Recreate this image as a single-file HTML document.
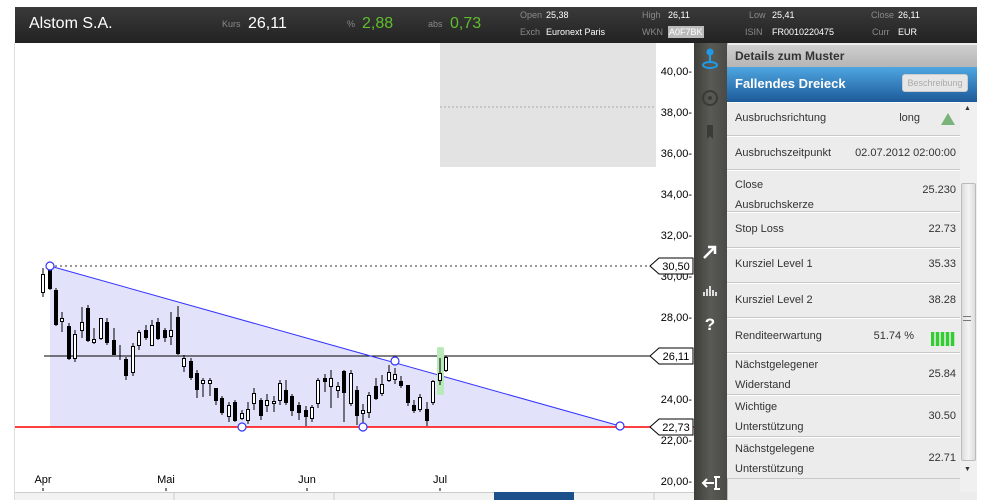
<!DOCTYPE html>
<html><head><meta charset="utf-8"><style>
*{margin:0;padding:0;box-sizing:border-box}
body{width:997px;height:500px;background:#fff;font-family:"Liberation Sans",Arial,sans-serif;position:relative;overflow:hidden}
.a{position:absolute;white-space:nowrap}
#hdr{left:15px;top:7px;width:962px;height:36px;background:linear-gradient(#3a3a3a,#222);}
.sm{font-size:9px;color:#8a8a8a}
.wv{font-size:9px;color:#fff}
.row{position:absolute;left:727px;width:233px;border-bottom:1px solid #c8c8c8;border-top:1px solid #fff;background:#ececec;font-size:11px;color:#333}
.row .l{position:absolute;left:8px}
.row .r{position:absolute;right:4px}
</style></head><body>
<div class="a" style="left:14px;top:43px;width:1px;height:457px;background:#ddd"></div>
<div class="a" id="hdr"></div>
<div class="a" style="left:29px;top:15px;font-size:16px;color:#fff">Alstom S.A.</div>
<div class="a sm" style="left:222px;top:19px">Kurs</div>
<div class="a" style="left:248px;top:15px;font-size:16px;color:#fff">26,11</div>
<div class="a sm" style="left:347px;top:19px">%</div>
<div class="a" style="left:362px;top:15px;font-size:16px;color:#5fbf2a">2,88</div>
<div class="a sm" style="left:428px;top:19px">abs</div>
<div class="a" style="left:450px;top:15px;font-size:16px;color:#5fbf2a">0,73</div>
<div class="a sm" style="left:520px;top:10px">Open</div><div class="a wv" style="left:546px;top:10px">25,38</div>
<div class="a sm" style="left:642px;top:10px">High</div><div class="a wv" style="left:668px;top:10px">26,11</div>
<div class="a sm" style="left:749px;top:10px">Low</div><div class="a wv" style="left:772px;top:10px">25,41</div>
<div class="a sm" style="left:871px;top:10px">Close</div><div class="a wv" style="left:898px;top:10px">26,11</div>
<div class="a sm" style="left:520px;top:27px">Exch</div><div class="a wv" style="left:546px;top:27px">Euronext Paris</div>
<div class="a sm" style="left:642px;top:27px">WKN</div><div class="a wv" style="left:668px;top:26px;background:#bbb;color:#fff;padding:1px 1px">A0F7BK</div>
<div class="a sm" style="left:745px;top:27px">ISIN</div><div class="a wv" style="left:772px;top:27px">FR0010220475</div>
<div class="a sm" style="left:872px;top:27px">Curr</div><div class="a wv" style="left:898px;top:27px">EUR</div>

<svg class="a" style="left:0;top:0" width="997" height="500">
<rect x="440" y="43" width="216" height="124" fill="#e3e3e3"/>
<line x1="440" y1="107" x2="656" y2="107" stroke="#aaa" stroke-dasharray="2,2"/>
<polygon points="50,266 620,426 50,427" fill="#e2e2fb"/>
<line x1="50" y1="266" x2="650" y2="266" stroke="#333" stroke-dasharray="2,3"/>
<line x1="44" y1="356" x2="650" y2="356" stroke="#000"/>
<line x1="15" y1="427" x2="694" y2="427" stroke="#f00" stroke-width="1.5"/>
<line x1="50" y1="266" x2="620" y2="426" stroke="#33f"/>
<rect x="437" y="347" width="7" height="48" rx="2" fill="#b9e8b9"/>
<g stroke="#000" stroke-width="1">
<path d="M43,268V297M50,262V290M56,288V326M62,312V332M69,323V360M75,330V362M82,307V338M88,305V342M94,328V344M101,318V340M107,318V345M114,328V355M120,345V360M126,357V380M133,343V376M139,330V350M146,325V340M152,320V346M158,318V340M165,328V342M171,312V345M178,306V355M184,355V372M191,358V380M197,370V398M203,378V397M210,378V396M216,388V405M222,396V415M229,402V422M235,400V422M242,410V420M248,402V424M254,388V410M261,398V420M267,394V412M274,396V412M280,380V405M286,380V405M292,394V416M299,402V420M306,406V426M312,405V422M318,378V408M325,374V392M331,370V408M338,382V398M344,370V422M351,370V406M357,386V425M363,404V425M369,392V418M376,378V400M382,375V396M389,365V382M395,368V384M401,376V388M408,385V406M414,400V413M420,394V412M427,402V426M433,380V405M440,358V385M446,356V372"/>
</g>
<g stroke="#000" stroke-width="1">
<rect x="41.5" y="274.5" width="3" height="18" fill="#fff"/><rect x="48.5" y="266.5" width="3" height="22" fill="#000"/>
<rect x="54.5" y="290.5" width="3" height="34" fill="#000"/><rect x="60.5" y="318.5" width="3" height="3" fill="#fff"/>
<rect x="67.5" y="326.5" width="3" height="32" fill="#000"/><rect x="73.5" y="334.5" width="3" height="24" fill="#fff"/>
<rect x="80.5" y="322.5" width="3" height="8" fill="#fff"/><rect x="86.5" y="308.5" width="3" height="32" fill="#000"/>
<rect x="92.5" y="339.5" width="3" height="3" fill="#fff"/><rect x="99.5" y="318.5" width="3" height="20" fill="#fff"/>
<rect x="105.5" y="322.5" width="3" height="20" fill="#000"/><rect x="112.5" y="340.5" width="3" height="14" fill="#000"/>
<rect x="124.5" y="359.5" width="3" height="16" fill="#000"/><rect x="131.5" y="346.5" width="3" height="26" fill="#fff"/>
<rect x="137.5" y="332.5" width="3" height="13" fill="#fff"/><rect x="144.5" y="330.5" width="3" height="7" fill="#000"/>
<rect x="150.5" y="325.5" width="3" height="20" fill="#fff"/><rect x="156.5" y="322.5" width="3" height="16" fill="#000"/>
<rect x="163.5" y="330.5" width="3" height="7" fill="#000"/><rect x="169.5" y="330.5" width="3" height="6" fill="#fff"/>
<rect x="176.5" y="317.5" width="3" height="36" fill="#000"/><rect x="182.5" y="358.5" width="3" height="8" fill="#fff"/>
<rect x="189.5" y="361.5" width="3" height="16" fill="#000"/><rect x="195.5" y="373.5" width="3" height="16" fill="#000"/>
<rect x="201.5" y="380.5" width="3" height="3" fill="#fff"/><rect x="208.5" y="380.5" width="3" height="3" fill="#fff"/>
<rect x="214.5" y="388.5" width="3" height="12" fill="#000"/><rect x="220.5" y="398.5" width="3" height="14" fill="#000"/>
<rect x="227.5" y="405.5" width="3" height="11" fill="#fff"/><rect x="233.5" y="402.5" width="3" height="18" fill="#000"/>
<rect x="240.5" y="413.5" width="3" height="5" fill="#fff"/><rect x="246.5" y="409.5" width="3" height="11" fill="#fff"/>
<rect x="252.5" y="393.5" width="3" height="10" fill="#fff"/><rect x="259.5" y="400.5" width="3" height="15" fill="#000"/>
<rect x="265.5" y="400.5" width="3" height="5" fill="#fff"/><rect x="272.5" y="401.5" width="3" height="2" fill="#fff"/>
<rect x="278.5" y="383.5" width="3" height="17" fill="#fff"/><rect x="284.5" y="390.5" width="3" height="12" fill="#000"/>
<rect x="290.5" y="396.5" width="3" height="14" fill="#000"/><rect x="297.5" y="405.5" width="3" height="7" fill="#000"/>
<rect x="304.5" y="410.5" width="3" height="6" fill="#000"/><rect x="310.5" y="407.5" width="3" height="11" fill="#fff"/>
<rect x="316.5" y="380.5" width="3" height="23" fill="#fff"/><rect x="323.5" y="378.5" width="3" height="3" fill="#000"/>
<rect x="329.5" y="378.5" width="3" height="8" fill="#fff"/><rect x="336.5" y="386.5" width="3" height="4" fill="#fff"/>
<rect x="342.5" y="371.5" width="3" height="21" fill="#000"/><rect x="349.5" y="373.5" width="3" height="30" fill="#fff"/>
<rect x="355.5" y="390.5" width="3" height="25" fill="#000"/><rect x="361.5" y="410.5" width="3" height="3" fill="#fff"/>
<rect x="367.5" y="395.5" width="3" height="17" fill="#fff"/><rect x="374.5" y="386.5" width="3" height="12" fill="#000"/>
<rect x="380.5" y="384.5" width="3" height="9" fill="#fff"/><rect x="387.5" y="372.5" width="3" height="8" fill="#fff"/>
<rect x="393.5" y="374.5" width="3" height="5" fill="#fff"/><rect x="399.5" y="381.5" width="3" height="4" fill="#000"/>
<rect x="406.5" y="385.5" width="3" height="17" fill="#000"/><rect x="412.5" y="405.5" width="3" height="5" fill="#000"/>
<rect x="418.5" y="397.5" width="3" height="12" fill="#fff"/><rect x="425.5" y="409.5" width="3" height="11" fill="#000"/>
<rect x="431.5" y="381.5" width="3" height="21" fill="#fff"/><rect x="438.5" y="373.5" width="3" height="7" fill="#fff"/>
<rect x="444.5" y="357.5" width="3" height="13" fill="#fff"/>
</g>
<g fill="#fff" stroke="#33f" stroke-width="1.2">
<circle cx="50" cy="266" r="4"/><circle cx="242" cy="427" r="4"/><circle cx="363" cy="427" r="4"/><circle cx="395" cy="361" r="4"/><circle cx="620" cy="426" r="4"/>
</g>
<g font-size="11" fill="#000" text-anchor="end">
<text x="692" y="75">40,00-</text><text x="692" y="116">38,00-</text><text x="692" y="157">36,00-</text><text x="692" y="198">34,00-</text><text x="692" y="239">32,00-</text><text x="692" y="280">30,00-</text><text x="692" y="321">28,00-</text><text x="692" y="403">24,00-</text><text x="692" y="444">22,00-</text><text x="692" y="485">20,00-</text>
</g>
<g stroke="#000" fill="#fff">
<path d="M650,266L659,258H693V274H659Z"/><path d="M650,356L659,348H693V364H659Z"/><path d="M650,427L659,419H693V435H659Z"/>
</g>
<g font-size="11" fill="#000" text-anchor="middle">
<text x="676" y="270">30,50</text><text x="676" y="360">26,11</text><text x="676" y="431">22,73</text>
<text x="43" y="483">Apr</text><text x="166" y="483">Mai</text><text x="307" y="483">Jun</text><text x="440" y="483">Jul</text>
</g>
<path d="M43,488v3M166,488v3M307,488v3M440,488v3" stroke="#000"/>
<rect x="15" y="492" width="679" height="8" fill="#f2f2f2"/><line x1="15" y1="492.5" x2="694" y2="492.5" stroke="#ccc"/>
<path d="M174,492v8M334,492v8M654,492v8" stroke="#ccc"/>
<rect x="494" y="492" width="80" height="8" fill="#1d4f8a"/>
</svg>

<div class="a" style="left:694px;top:43px;width:33px;height:457px;background:linear-gradient(90deg,#3d3d3a,#5a5a55 50%,#4a4a46)"></div>
<svg class="a" style="left:694px;top:43px" width="33" height="457">
<circle cx="16" cy="9" r="3.5" fill="#1e9be8"/><rect x="15" y="11" width="2" height="8" fill="#1e9be8"/><ellipse cx="16" cy="22" rx="7" ry="3" fill="none" stroke="#1e9be8" stroke-width="2"/>
<circle cx="16" cy="55" r="7" fill="none" stroke="#3a3a38" stroke-width="2"/><circle cx="16" cy="55" r="2" fill="#3a3a38"/>
<path d="M13,82h6v14l-3,-3l-3,3z" fill="#3a3a38"/>
<path d="M10,215L20,205M14,204h7v7" stroke="#fff" stroke-width="2.5" fill="none"/>
<path d="M10,253v-4M13,253v-7M16,253v-10M19,253v-6M22,253v-4" stroke="#fff" stroke-width="1.6"/>
<text x="16" y="287" font-size="17" font-weight="bold" fill="#fff" text-anchor="middle">?</text>
<path d="M10,440h10M13,436l-4,4l4,4M22,434v12M20,434h6M20,446h6" stroke="#fff" stroke-width="2" fill="none"/>
</svg>

<div class="a" style="left:727px;top:43px;width:250px;height:457px;background:#ececec;border-left:1px solid #bbb"></div>
<div class="a" style="left:727px;top:45px;width:250px;height:22px;background:linear-gradient(#cfcfcf,#b5b5b5);font-size:12px;font-weight:bold;color:#333;padding:4px 8px">Details zum Muster</div>
<div class="a" style="left:727px;top:67px;width:250px;height:35px;background:linear-gradient(#4ea6e0,#1d5a9a);font-size:13px;font-weight:bold;color:#fff;padding:9px 8px">Fallendes Dreieck</div>
<div class="a" style="left:902px;top:74px;width:66px;height:18px;background:#e6e6e6;border:1px solid #ccc;border-radius:3px;font-size:9px;color:#aaa;text-align:center;line-height:16px">Beschreibung</div>
<div class="row" style="top:102px;height:34px"><span class="l" style="top:9px">Ausbruchsrichtung</span><span class="r" style="top:9px;right:40px">long</span><svg class="a" style="left:214px;top:10px" width="14" height="12"><path d="M7,0L14,12H0Z" fill="#7ab37a"/></svg></div>
<div class="row" style="top:136px;height:34px"><span class="l" style="top:10px">Ausbruchszeitpunkt</span><span class="r" style="top:10px">02.07.2012 02:00:00</span></div>
<div class="row" style="top:170px;height:42px"><span class="l" style="top:4px;line-height:20px">Close<br>Ausbruchskerze</span><span class="r" style="top:13px">25.230</span></div>
<div class="row" style="top:212px;height:36px"><span class="l" style="top:10px">Stop Loss</span><span class="r" style="top:10px">22.73</span></div>
<div class="row" style="top:248px;height:35px"><span class="l" style="top:9px">Kursziel Level 1</span><span class="r" style="top:9px">35.33</span></div>
<div class="row" style="top:283px;height:35px"><span class="l" style="top:10px">Kursziel Level 2</span><span class="r" style="top:10px">38.28</span></div>
<div class="row" style="top:318px;height:35px"><span class="l" style="top:11px">Renditeerwartung</span><span class="r" style="top:11px;right:46px">51.74 %</span><svg class="a" style="left:204px;top:13px" width="25" height="14"><path d="M1.5,0v14M6.5,0v14M11.5,0v14M16.5,0v14M21.5,0v14" stroke="#3c3" stroke-width="3.5"/></svg></div>
<div class="row" style="top:353px;height:42px"><span class="l" style="top:1px;line-height:20px">Nächstgelegener<br>Widerstand</span><span class="r" style="top:14px">25.84</span></div>
<div class="row" style="top:395px;height:42px"><span class="l" style="top:1px;line-height:20px">Wichtige<br>Unterstützung</span><span class="r" style="top:14px">30.50</span></div>
<div class="row" style="top:437px;height:42px"><span class="l" style="top:1px;line-height:20px">Nächstgelegene<br>Unterstützung</span><span class="r" style="top:14px">22.71</span></div>
<div class="a" style="left:960px;top:102px;width:17px;height:390px;background:#f0f0f0"></div>
<div class="a" style="left:961px;top:183px;width:15px;height:278px;background:linear-gradient(90deg,#ddd,#f4f4f4,#ddd);border:1px solid #bbb;border-radius:2px"></div>
<div class="a" style="left:964px;top:105px;font-size:7px;color:#333">▲</div>
<div class="a" style="left:964px;top:466px;font-size:7px;color:#333">▼</div>
<div class="a" style="left:963px;top:316px;width:8px;height:5px;border-top:1px solid #777;border-bottom:1px solid #777"></div>
<div class="a" style="left:977px;top:43px;width:20px;height:457px;background:#fff"></div>
</body></html>
